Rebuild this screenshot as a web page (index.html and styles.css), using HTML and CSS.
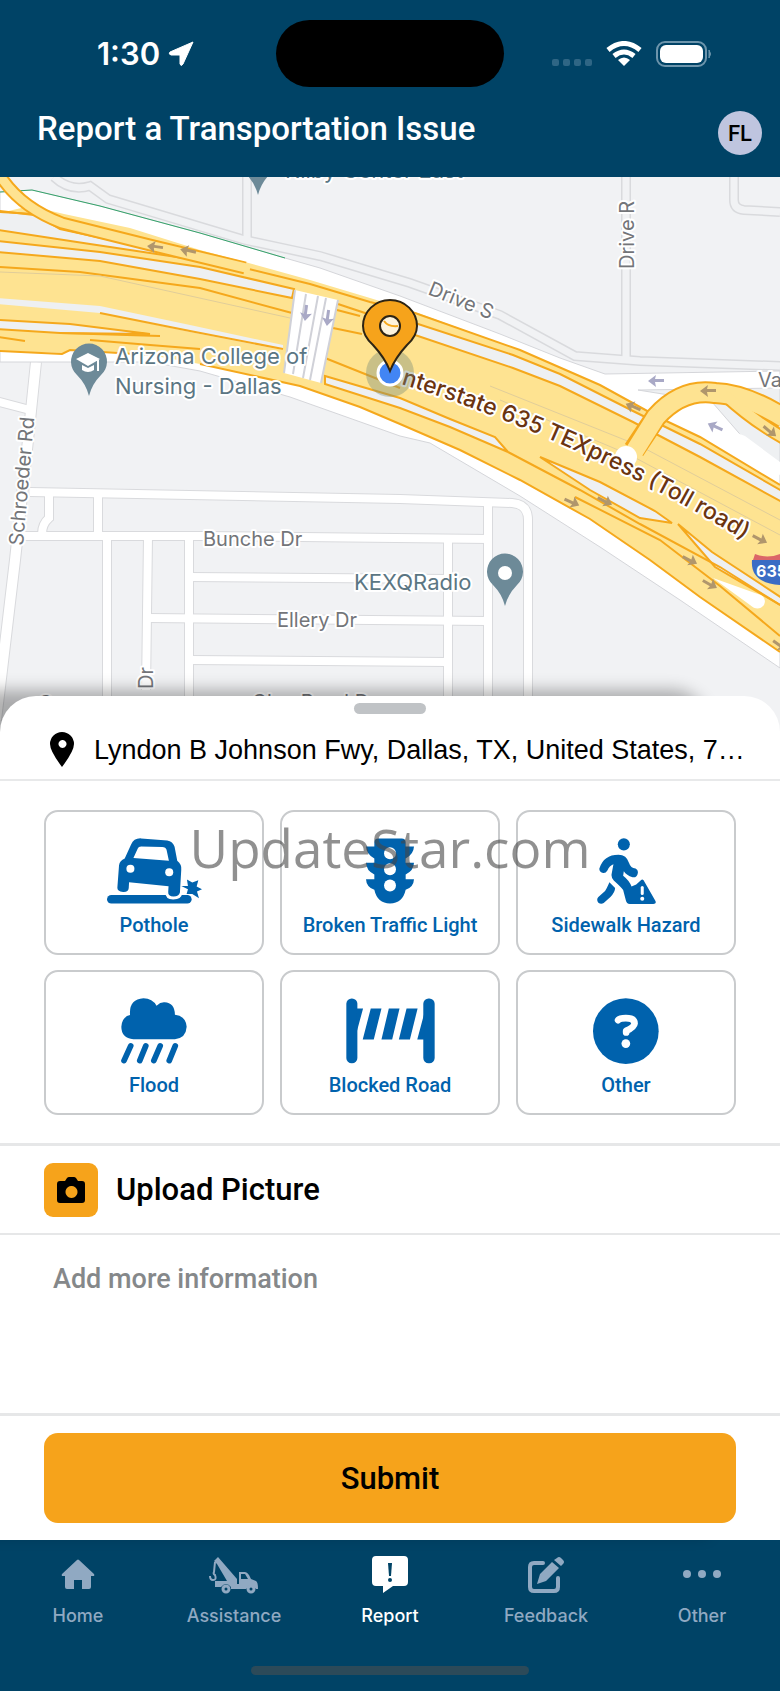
FILE: index.html
```html
<!DOCTYPE html>
<html lang="en">
<head>
    <meta charset="UTF-8">
    <meta name="viewport" content="width=device-width, initial-scale=1.0">
    <title>Report a Transportation Issue</title>
    <link rel="stylesheet" href="styles.css">
</head>
<body>
    <header class="topbar">
        <div class="status">
            <div class="status-left">
                <span class="time">1:30</span>
                <svg width="26" height="26" viewBox="0 0 26 26"><path d="M25 1 L2 11 Q0 13 3 14 L12 14 L12 23 Q13 26 15 23 Z" fill="#fff" stroke="#fff" stroke-linejoin="round"/></svg>
            </div>
            <div class="island"></div>
            <div class="status-right">
                <svg width="40" height="26" viewBox="0 0 40 26" fill="#2f6685"><rect x="0" y="18" width="7" height="7" rx="2"/><rect x="11" y="18" width="7" height="7" rx="2"/><rect x="22" y="18" width="7" height="7" rx="2"/><rect x="33" y="18" width="7" height="7" rx="2"/></svg>
                <svg width="36" height="26" viewBox="0 0 36 26" fill="none" stroke="#fff" stroke-width="5"><path d="M2 9 Q18 -4 34 9"/><path d="M8 15 Q18 7 28 15"/><path d="M18 25 L12 19 Q18 14 24 19 Z" fill="#fff" stroke="none"/></svg>
                <svg width="56" height="26" viewBox="0 0 56 26"><rect x="1" y="1" width="49" height="24" rx="8" fill="none" stroke="#6d95ac" stroke-width="2"/><rect x="4" y="4" width="43" height="18" rx="6" fill="#fff"/><path d="M53 9 Q56 13 53 17 Z" fill="#6d95ac" stroke="#6d95ac"/></svg>
            </div>
        </div>
        <div class="titlebar">
            <h1>Report a Transportation Issue</h1>
            <button type="button" class="avatar">FL</button>
        </div>
    </header>

    <section class="map">
        <svg viewBox="0 177 780 560" preserveAspectRatio="xMidYMin slice">
            <rect x="0" y="177" width="780" height="560" fill="#f1f2f4"/>

            <!-- private drives -->
            <g fill="none" stroke="#d9dadd" stroke-width="10">
                <path d="M54 177 Q70 192 90 186 L108 199 L245 240 L320 256 L410 283 L500 315 L575 356 L640 361 L780 366"/>
                <path d="M247 177 V242"/>
                <path d="M626 177 V360"/>
                <path d="M734 177 V200 Q734 209 744 210 L780 212"/>
            </g>
            <g fill="none" stroke="#f1f2f4" stroke-width="7">
                <path d="M54 177 Q70 192 90 186 L108 199 L245 240 L320 256 L410 283 L500 315 L575 356 L640 361 L780 366"/>
                <path d="M247 177 V242"/>
                <path d="M626 177 V360"/>
                <path d="M734 177 V200 Q734 209 744 210 L780 212"/>
            </g>

            <!-- local streets -->
            <g fill="none" stroke="#d9dadd" stroke-width="10">
                <path d="M36 362 L28 440 L15 560 L2 670 L-4 720" stroke-width="12"/>
                <path d="M-4 401 L30 410"/>
                <path d="M30 492 L400 499 L512 503 Q528 504 528 520 V737"/>
                <path d="M22 536 H200 L490 539"/>
                <path d="M49 494 V518 Q42 524 42 534"/>
                <path d="M98 494 V536 M107 536 V737 M148 536 L146 690 M189 536 V737 M448 540 V737 M488 504 V737"/>
                <path d="M189 577 L448 579 M148 618 L488 621 M189 660 L448 662"/>
            </g>
            <g fill="none" stroke="#fff" stroke-width="8">
                <path d="M36 362 L28 440 L15 560 L2 670 L-4 720" stroke-width="10"/>
                <path d="M-4 401 L30 410"/>
                <path d="M30 492 L400 499 L512 503 Q528 504 528 520 V737"/>
                <path d="M22 536 H200 L490 539"/>
                <path d="M49 494 V518 Q42 524 42 534"/>
                <path d="M98 494 V536 M107 536 V737 M148 536 L146 690 M189 536 V737 M448 540 V737 M488 504 V737"/>
                <path d="M189 577 L448 579 M148 618 L488 621 M189 660 L448 662"/>
            </g>

            <!-- frontage roads -->
            <path d="M0 192 L32 190 L100 206 L200 233 L285 258 L320 268 L400 296 L500 334 L560 358 L605 374 L780 371 V668 L680 600 L600 547 L520 496 L430 443 L400 436 L290 397 L200 371 L150 362 L0 362 Z" fill="#fff" stroke="#d5d6da"/>
            <path d="M0 192 L32 190 L100 206 L200 233 L285 258" fill="none" stroke="#34a36a" stroke-width="1"/>
            <path d="M638 390 L780 388 V474 L745 440 L712 402 Z" fill="#eef0f2" stroke="#d5d6da"/>
            <path d="M698 405 Q690 415 745 436 L780 462 V475 L690 425 Z" fill="#fff"/>

            <!-- highway -->
            <path d="M0 213 L30 206 L64 214 L130 228 L200 250 L245 262 L310 280 L370 298 L415 312 L520 350 L600 385 L660 418 L700 437 L780 485 V652 L700 597 L650 560 L590 519 L520 480 L460 450 L400 424 L360 407 L300 386 L200 364 L150 355 L70 350 L62 353 L0 351 Z" fill="#fee391"/>
            <g fill="#eef0f2" stroke="#f5a81c" stroke-width="2">
                <path d="M-2 212 L34 214 L60 229 L120 242 L190 259 L90 244 L-2 230 Z"/>
                <path d="M-2 241 L100 252 L200 267 L294 289 L292 298 L200 279 L100 261 L-2 252 Z"/>
                <path d="M-2 320 L70 324 L150 334 L60 333 L-2 329 Z"/>
                <path d="M415 323 L513 355 L560 374 L633 411 L700 444 L782 491 V502 L700 457 L633 422 L560 386 L513 368 L415 335 Z"/>
                <path d="M325 376 L400 398 L450 419 L495 437 L508 452 L450 427 L400 408 L325 384 Z"/>
                <path d="M540 457 L600 482 L655 511 L672 523 L640 518 L590 490 Z"/>
                <path d="M678 524 L712 552 L782 598 V606 L715 567 Z"/>
            </g>
            <path d="M-2 298 L100 306 L190 325 L283 345 L283 350 L190 332 L100 313 L-2 304 Z" fill="#eef0f2"/>
            <g fill="none" stroke="#f5a81c" stroke-width="2">
                <path d="M-2 212 L0 211 L34 215 M-2 267 L80 272 L200 288 L292 313"/>
                <path d="M100 313 L190 331 L283 349 M-2 337 L25 341 M-2 351 L62 354 L70 350 L150 355"/>
                <path d="M60 333 L160 336 M90 340 L150 345 L200 349"/>
                <path d="M200 364 L300 386 L360 407 L400 424 L460 450 L520 480 L590 519 L650 560 L700 597 L780 652"/>
                <path d="M240 262 L245 268 L310 284 L370 302 L415 313 L520 350 L600 385 L660 418 L700 437 L780 485"/>
                <path d="M338 304 L380 318 M337 310 L360 316 M333 328 L362 334"/>
                <path d="M325 358 L400 388 M508 452 L580 490 L640 524 L720 567 L780 605"/>
                <path d="M575 497 L660 540 L720 586 L780 636"/>
            </g>
            <g fill="none" stroke="#e0cd9a" stroke-width="1">
                <path d="M0 272 L100 276 L290 318 M490 386 L640 446 L780 520 M500 400 L630 455 L780 535"/>
            </g>

            <!-- ramps -->
            <path d="M-6 165 Q14 205 62 223 L150 245 L245 268" fill="none" stroke="#f5a81c" stroke-width="13"/>
            <path d="M-6 165 Q14 205 62 223 L150 245 L250 269" fill="none" stroke="#fee391" stroke-width="9"/>
            <path d="M634 450 L656 417 Q682 388 715 393 Q745 394 784 418" fill="none" stroke="#f5a81c" stroke-width="22"/>
            <path d="M725 395 Q752 420 784 438" fill="none" stroke="#f5a81c" stroke-width="14"/>
            <path d="M634 452 L656 417 Q682 388 715 393 Q745 394 784 418" fill="none" stroke="#fee391" stroke-width="18"/>
            <path d="M725 395 Q752 420 784 438" fill="none" stroke="#fee391" stroke-width="10"/>
            <circle cx="626" cy="457" r="11" fill="#fff"/>
            <path d="M713 578 L755 593 Q768 596 764 605 Q758 612 750 605 Z" fill="#fff"/>

            <!-- overpass -->
            <path d="M295 290 L338 300 L321 383 L284 373 Z" fill="#fff"/>
            <path d="M295 290 L284 373 M306 294 L293 374 M318 296 L303 378 M326 298 L310 380 M338 300 L321 383" fill="none" stroke="#d0d1d8" stroke-width="2"/>

            <!-- direction arrows -->
            <defs>
                <path id="arrow" d="M-8 0 L0 -6 L-1 -2 H8 V1 H-1 L0 6 Z"/>
            </defs>
            <g fill="#b0966c">
                <use href="#arrow" transform="translate(155 247) rotate(8)"/>
                <use href="#arrow" transform="translate(188 251) rotate(12)"/>
                <use href="#arrow" transform="translate(633 407) rotate(24)"/>
                <use href="#arrow" transform="translate(708 391)"/>
                <use href="#arrow" transform="translate(770 431) rotate(220)"/>
                <use href="#arrow" transform="translate(572 502) rotate(205)"/>
                <use href="#arrow" transform="translate(605 501) rotate(208)"/>
                <use href="#arrow" transform="translate(690 560) rotate(208)"/>
                <use href="#arrow" transform="translate(710 584) rotate(210)"/>
                <use href="#arrow" transform="translate(760 539) rotate(208)"/>
                <use href="#arrow" transform="translate(780 645) rotate(215)"/>
            </g>
            <g fill="#a9a9c6">
                <use href="#arrow" transform="translate(306 313) rotate(-82)"/>
                <use href="#arrow" transform="translate(328 318) rotate(-82)"/>
                <use href="#arrow" transform="translate(656 381)"/>
                <use href="#arrow" transform="translate(715 427) rotate(25)"/>
            </g>

            <!-- places -->
            <g fill="#6d8a98">
                <path d="M89 396 Q86 384 77 375 A18 18 0 1 1 101 375 Q92 384 89 396 Z"/>
                <path d="M505 606 Q502 594 493 585 A18 18 0 1 1 517 585 Q508 594 505 606 Z"/>
                <path d="M258 195 Q255 183 246 174 H270 Q261 183 258 195 Z"/>
            </g>
            <circle cx="505" cy="573" r="7" fill="#fff"/>
            <path d="M76 359 L88 353 L100 359 L88 366 Z M82 365 L88 368 L94 365 V370 Q88 374 82 370 Z M97 360 H99 V371 H97 Z" fill="#fff"/>

            <path d="M752 560 Q750 583 780 585 V560 Z" fill="#3a6cc4"/>
            <path d="M753 560 L755 554 Q767 559 780 554 V560 Z" fill="#db6668"/>

            <g class="place-text">
                <text x="115" y="364">Arizona College of</text>
                <text x="115" y="394">Nursing - Dallas</text>
                <text x="354" y="590">KEXQRadio</text>
                <text x="285" y="178">Kilby Center East</text>
            </g>
            <g class="street-text">
                <text x="203" y="546">Bunche Dr</text>
                <text x="277" y="627">Ellery Dr</text>
                <text x="252" y="709">Glen Road Dr</text>
                <text x="38" y="710">C</text>
                <text transform="translate(634 269) rotate(-90)">Drive R</text>
                <text transform="translate(427 294) rotate(22)">Drive S</text>
                <text transform="translate(23 546) rotate(-85)">Schroeder Rd</text>
                <text transform="translate(153 689) rotate(-90)">Dr</text>
                <text x="758" y="387">Va</text>
            </g>
            <path id="tollway" d="M401 384 Q590 442 780 562" fill="none"/>
            <text class="highway-text"><textPath href="#tollway">nterstate 635 TEXpress (Toll road)</textPath></text>
            <text class="shield-text" x="756" y="577">635</text>

            <circle cx="390" cy="373" r="24" fill="#7b8b77" fill-opacity="0.4"/>
            <circle cx="390" cy="373" r="12" fill="#4285f4" stroke="#fff" stroke-width="3"/>
            <path d="M390 371 Q385 358 373 345 Q363 336 363 326 A27 26 0 0 1 417 326 Q417 336 407 345 Q395 358 390 371 Z" fill="#f6a31b" stroke="#2d2414" stroke-width="2"/>
            <circle cx="390" cy="326" r="10" fill="#fdf3dc" stroke="#2d2414" stroke-width="2"/>
            <path d="M384 321 Q388 327 398 326" fill="none" stroke="#f5a81c" stroke-width="2"/>
        </svg>
    </section>

    <main class="sheet">
        <div class="handle"></div>
        <div class="address">
            <svg width="24" height="36" viewBox="0 0 24 36"><path fill-rule="evenodd" d="M12 35 Q0 19 0 12 A12 12 0 0 1 24 12 Q24 19 12 35 Z M12 8 a4 4 0 1 0 1 0 Z"/></svg>
            <p>Lyndon B Johnson Fwy, Dallas, TX, United States, 7…</p>
        </div>

        <div class="issues">
            <button type="button" class="issue">
                <svg width="95" height="66" viewBox="228 117 284 197" fill="#0062ad">
                    <rect x="228" y="287" width="253" height="26" rx="13"/>
                    <path d="M411 266 V280 Q411 291 426 292 Q443 292 444 280 L448 240" fill="none" stroke="#fff" stroke-width="18"/>
                    <path fill-rule="evenodd" d="M300 136 Q308 117 330 118 L408 124 Q425 127 430 143 L438 185 Q452 196 450 212 L446 280 Q443 292 427 292 Q410 291 411 278 L412 261 L294 249 L293 266 Q292 279 276 278 Q258 277 259 265 L264 198 Q266 184 281 178 Z M320 148 Q322 142 330 142 L393 144 Q404 145 406 152 L413 185 L307 177 Z"/>
                    <circle cx="298" cy="209" r="12" fill="#fff"/>
                    <circle cx="414" cy="219" r="12" fill="#fff"/>
                    <path d="M450 260 L470 260 L467 241 L483 250 L501 243 L496 262 L512 270 L497 277 L503 297 L483 284 L466 284 L470 270 Z"/>
                </svg>
                <span>Pothole</span>
            </button>
            <button type="button" class="issue">
                <svg width="48" height="66" viewBox="-42 117 144 197" fill="#0062ad">
                    <path d="M-17 130 Q-17 118 -5 118 H65 Q77 118 77 130 V142 H102 Q101 165 77 178 V191 H102 Q101 215 77 226 V240 H102 Q101 263 77 272 Q68 313 30 313 Q-8 313 -17 272 Q-41 263 -42 240 H-17 V226 Q-41 215 -42 191 H-17 V178 Q-41 165 -42 142 H-17 Z"/>
                    <g fill="#fff"><circle cx="30" cy="162" r="18"/><circle cx="30" cy="210" r="18"/><circle cx="30" cy="259" r="18"/></g>
                </svg>
                <span>Broken Traffic Light</span>
            </button>
            <button type="button" class="issue">
                <svg width="59" height="66" viewBox="650 117 176 197" fill="#0062ad">
                    <circle cx="730" cy="136" r="18"/>
                    <path d="M657 208 Q670 167 714 167 Q738 167 746 192 Q750 206 765 208 Q775 213 771 225 Q768 236 756 234 Q738 228 730 216 L728 230 Q746 244 753 262 L767 256 L781 243 Q785 238 789 243 L824 304 Q829 313 818 314 H748 Q738 314 736 303 L728 272 Q723 265 700 244 Q691 234 694 222 L699 195 Q687 199 681 214 Q675 224 666 221 Q656 218 657 208 Z"/>
                    <path d="M687 249 L704 266 Q704 278 690 293 L670 311 Q662 316 654 310 Q647 301 654 293 L674 275 Q679 268 687 249 Z"/>
                    <path d="M785 265 V283" stroke="#fff" stroke-width="9" stroke-linecap="round"/>
                    <circle cx="785" cy="298" r="6" fill="#fff"/>
                </svg>
                <span>Sidewalk Hazard</span>
            </button>
            <button type="button" class="issue">
                <svg width="66" height="66" viewBox="272 116 197 197" fill="#0062ad">
                    <path d="M309 239 Q273 236 273 202 Q275 172 299 167 Q295 120 339 117 Q366 118 378 139 Q390 128 402 129 Q432 130 433 166 Q466 170 468 202 Q466 236 433 239 Z"/>
                    <path d="M301 259 L281 303 M346 259 L328 303 M389 259 L370 303 M434 259 L416 303" stroke="#0062ad" stroke-width="17" stroke-linecap="round"/>
                </svg>
                <span>Flood</span>
            </button>
            <button type="button" class="issue">
                <svg width="89" height="66" viewBox="947 116 266 197" fill="#0062ad">
                    <rect x="948" y="117" width="33" height="194" rx="16"/>
                    <rect x="1178" y="117" width="34" height="194" rx="16"/>
                    <path d="M978 147 H998 L980 214 Z M1021 147 H1053 L1030 240 H997 Z M1075 147 H1107 L1085 240 H1053 Z M1128 147 H1161 L1138 240 H1105 Z M1180 165 L1160 240 H1182 Z"/>
                </svg>
                <span>Blocked Road</span>
            </button>
            <button type="button" class="issue">
                <svg width="66" height="66" viewBox="640 116 197 197" fill="#0062ad">
                    <circle cx="738" cy="215" r="98"/>
                    <path d="M715 182 Q720 176 738 176 Q764 176 764 192 Q763 203 739 214 V219" fill="none" stroke="#fff" stroke-width="20" stroke-linecap="round" stroke-linejoin="round"/>
                    <circle cx="738" cy="252" r="13" fill="#fff"/>
                </svg>
                <span>Other</span>
            </button>
            <div class="watermark">UpdateStar.com</div>
        </div>

        <button type="button" class="upload">
            <span class="camera">
                <svg width="28" height="26" viewBox="0 0 28 26"><path fill-rule="evenodd" d="M3 4 H8 L10 1 Q11 0 12 0 H17 Q18 0 19 1 L21 4 H25 Q28 4 28 7 V23 Q28 26 25 26 H3 Q0 26 0 23 V7 Q0 4 3 4 Z M14 9 a6 6 0 1 0 1 0 Z"/></svg>
            </span>
            Upload Picture
        </button>

        <textarea class="info" placeholder="Add more information" aria-label="Add more information"></textarea>

        <div class="submit-row">
            <button type="submit" class="submit">Submit</button>
        </div>
    </main>

    <footer class="bottombar">
        <nav>
            <a href="#home">
                <svg width="34" height="38" viewBox="0 0 34 38" fill="currentColor"><path d="M16 4 Q17 3 18 4 L33 18 Q34 20 32 20 H30 V31 Q30 33 28 33 H21 V24 H13 V33 H6 Q4 33 4 31 V20 H2 Q0 20 1 18 Z"/></svg>
                <span>Home</span>
            </a>
            <a href="#assistance">
                <svg width="50" height="38" viewBox="0 0 50 38" fill="currentColor">
                    <path d="M5 5 L9 1 L28 23 V31 H22 Q17 25 12 31 H6 V25 H18 L8 8 Z M30 16 H36 Q38 16 40 19 L42 23 L47 25 Q49 26 49 33 H47 Q42 26 37 33 H22 V28 H30 Z"/>
                    <path d="M32 18 H36 L39 23 H32 Z" fill="#004366"/>
                    <path d="M6 6 L5 16 Q4 18 6 19 Q8 24 4 24 Q1 24 1 20" fill="none" stroke="currentColor" stroke-width="2"/>
                    <g fill="#004366" stroke="currentColor" stroke-width="3"><circle cx="17" cy="33" r="3"/><circle cx="42" cy="33" r="3"/></g>
                </svg>
                <span>Assistance</span>
            </a>
            <a href="#report" class="active">
                <svg width="38" height="38" viewBox="0 0 38 38"><path d="M5 0 H33 Q37 0 37 4 V26 Q37 30 33 30 H22 L12 37 V30 H5 Q1 30 1 26 V4 Q1 0 5 0 Z" fill="#fff"/><path d="M17 7 H21 L20 20 H18 Z" fill="#004366"/><circle cx="19" cy="24" r="2" fill="#004366"/></svg>
                <span>Report</span>
            </a>
            <a href="#feedback">
                <svg width="38" height="38" viewBox="0 0 38 38"><path d="M16 7 H7 Q3 7 3 11 V31 Q3 35 7 35 H27 Q31 35 31 31 V22" fill="none" stroke="currentColor" stroke-width="4" stroke-linecap="round"/><path d="M10 28 L13 18 L25 6 L32 12 L19 25 Z M27 4 L30 2 Q32 0 34 2 L36 4 Q38 6 36 8 L34 10 Z" fill="currentColor"/></svg>
                <span>Feedback</span>
            </a>
            <a href="#other">
                <svg width="40" height="38" viewBox="0 0 40 38" fill="currentColor"><circle cx="5" cy="18" r="4"/><circle cx="20" cy="18" r="4"/><circle cx="35" cy="18" r="4"/></svg>
                <span>Other</span>
            </a>
        </nav>
        <div class="home-indicator"></div>
    </footer>
</body>
</html>
```
FILE: styles.css
```css
* {
    box-sizing: border-box;
}

body {
    margin: 0;
    background-color: #fff;
    font-family: Roboto, "Liberation Sans", sans-serif;
    color: #000;
}

button {
    font-family: inherit;
    border: none;
    padding: 0;
    cursor: pointer;
}

svg {
    display: block;
    flex-shrink: 0;
}

.topbar {
    background-color: #004366;
    color: #fff;
    padding: 20px 0 22px;
}

.status {
    display: grid;
    grid-template-columns: 1fr 228px 1fr;
    align-items: center;
}

.status-left,
.status-right {
    display: flex;
    align-items: center;
    gap: 8px;
}

.status-left {
    padding-left: 97px;
}

.status-right {
    justify-content: flex-end;
    gap: 14px;
    padding-right: 68px;
}

.time {
    font-family: Inter, sans-serif;
    font-size: 31px;
    font-weight: 600;
    line-height: 40px;
}

.island {
    height: 67px;
    border-radius: 34px;
    background-color: #000;
}

.titlebar {
    display: flex;
    justify-content: space-between;
    align-items: center;
    margin-top: 24px;
    padding: 0 18px 0 37px;
}

h1 {
    margin: 0 0 8px;
    font-size: 33px;
    font-weight: 500;
    line-height: 34px;
}

.avatar {
    width: 44px;
    height: 44px;
    border-radius: 50%;
    background-color: #bfc5df;
    color: #000;
    font-size: 22px;
    font-weight: 500;
}

.map {
    height: 560px;
}

.map svg {
    width: 100%;
    height: 100%;
}

.map text {
    font-family: Inter, sans-serif;
    paint-order: stroke;
    stroke: #fff;
    stroke-width: 4px;
    stroke-linejoin: round;
}

.map .place-text text {
    font-size: 22px;
    fill: #5b7683;
}

.map .street-text text {
    font-size: 20px;
    fill: #737579;
}

.map .highway-text {
    font-size: 23px;
    font-weight: 500;
    fill: #6b3410;
}

.map .shield-text {
    font-size: 16px;
    font-weight: 700;
    fill: #fff;
    stroke: none;
}

.sheet {
    position: relative;
    margin-top: -41px;
    padding-top: 7px;
    border-radius: 36px 36px 0 0;
    background-color: #fff;
    box-shadow: -72px -6px 16px rgba(0, 0, 0, 0.3);
}

.handle {
    width: 72px;
    height: 11px;
    margin: 0 auto;
    border-radius: 6px;
    background-color: #c0c3c6;
}

.address {
    display: flex;
    align-items: center;
    gap: 20px;
    height: 67px;
    padding: 6px 24px 0 50px;
    border-bottom: 2px solid #e8e9ea;
}

.address p {
    flex: 1;
    margin: 0;
    font-family: "Liberation Sans", sans-serif;
    font-size: 27px;
    line-height: 34px;
    white-space: nowrap;
    overflow: hidden;
    text-overflow: ellipsis;
}

.issues {
    position: relative;
    display: grid;
    grid-template-columns: repeat(3, 1fr);
    gap: 15px 16px;
    padding: 29px 44px 28px;
    border-bottom: 3px solid #e6e7e8;
}

.issue {
    display: flex;
    flex-direction: column;
    align-items: center;
    gap: 8px;
    height: 145px;
    padding-top: 26px;
    border: 2px solid #c9cbcd;
    border-radius: 14px;
    background-color: #fff;
    color: #0062ad;
    font-size: 20px;
    font-weight: 500;
    line-height: 26px;
}

.watermark {
    position: absolute;
    top: 30px;
    left: 0;
    right: 0;
    text-align: center;
    font-family: "Open Sans", sans-serif;
    font-size: 53px;
    line-height: 74px;
    color: rgba(70, 70, 70, 0.6);
    pointer-events: none;
}

.upload {
    display: flex;
    align-items: center;
    gap: 18px;
    width: 100%;
    height: 89px;
    padding: 0 44px;
    border-bottom: 2px solid #e6e7e8;
    background-color: #fff;
    font-size: 31px;
    font-weight: 500;
    color: #000;
}

.camera {
    display: flex;
    align-items: center;
    justify-content: center;
    width: 54px;
    height: 54px;
    border-radius: 9px;
    background-color: #f6a31b;
}

.info {
    display: block;
    width: 100%;
    height: 181px;
    padding: 27px 53px;
    border: none;
    border-bottom: 3px solid #e6e7e8;
    font-family: inherit;
    font-size: 27px;
    font-weight: 500;
    line-height: 34px;
    resize: none;
    outline: none;
}

.info::placeholder {
    color: #85888a;
}

.submit-row {
    padding: 17px 44px;
}

.submit {
    display: block;
    width: 100%;
    height: 90px;
    border-radius: 14px;
    background-color: #f6a31b;
    font-size: 31px;
    font-weight: 500;
    color: #000;
}

.bottombar {
    background-color: #004366;
    padding: 16px 0;
}

nav {
    display: grid;
    grid-template-columns: repeat(5, 1fr);
}

nav a {
    display: flex;
    flex-direction: column;
    align-items: center;
    gap: 11px;
    color: #90a9c2;
    font-family: Inter, sans-serif;
    font-size: 18px;
    font-weight: 500;
    line-height: 22px;
    text-decoration: none;
}

nav a.active {
    color: #fff;
}

.home-indicator {
    width: 278px;
    height: 9px;
    margin: 39px auto 0;
    border-radius: 5px;
    background-color: #2c4a59;
}
```
